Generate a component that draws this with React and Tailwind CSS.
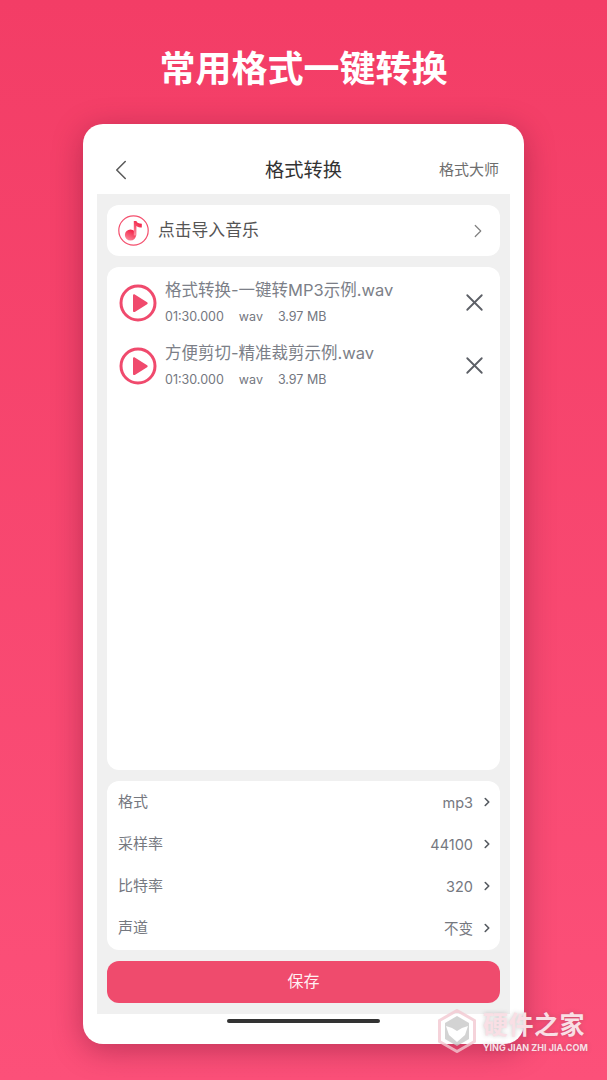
import { ChevronLeft, ChevronRight, X } from 'lucide-react'

const FILES = [
  { name: '格式转换-一键转MP3示例.wav', time: '01:30.000', ext: 'wav', size: '3.97 MB' },
  { name: '方便剪切-精准裁剪示例.wav', time: '01:30.000', ext: 'wav', size: '3.97 MB' },
]

const SETTINGS = [
  { label: '格式', value: 'mp3' },
  { label: '采样率', value: '44100' },
  { label: '比特率', value: '320' },
  { label: '声道', value: '不变' },
]

function MusicIcon() {
  return (
    <svg width="31" height="31" viewBox="0 0 31 31" className="shrink-0">
      <defs>
        <linearGradient id="note" x1="0.7" y1="0" x2="0.2" y2="1">
          <stop offset="0" stopColor="#f2183f" />
          <stop offset="1" stopColor="#fb8f9f" />
        </linearGradient>
      </defs>
      <circle cx="15.5" cy="15.5" r="14.7" fill="#fff" stroke="#f4506e" strokeWidth="1.2" />
      <circle cx="12.500" cy="20" r="5.600" fill="url(#note)" />
      <path d="M15.800 6h2.600c.3 1.800 2.600 2.500 5.400 2.700v3.800c-2.200-.1-4-.6-5.400-1.600V20.500h-2.600z" fill="url(#note)" />
    </svg>
  )
}

function PlayIcon() {
  return (
    <svg width="38" height="38" viewBox="0 0 38 38" className="shrink-0">
      <circle cx="19" cy="19" r="17" fill="none" stroke="#f04a6d" strokeWidth="3" />
      <path d="M14 11.500c0-1 1-1.500 1.800-1l12.300 7.700c.8.500.8 1.500 0 2l-12.300 7.700c-.8.500-1.800 0-1.800-1z" fill="#f04a6d" />
    </svg>
  )
}

function FileRow({ file }) {
  return (
    <div className="flex h-[63px] items-center pl-[12px] pr-[11px]">
      <PlayIcon />
      <div className="ml-[8px] flex-1 min-w-0">
        <p className="-mt-[1px] text-[16.500px] leading-[24px] text-[#7c7f88]">{file.name}</p>
        <div className="mt-[6px] flex text-[12.500px] leading-[18px] text-[#74777f]">
          <span>{file.time}</span>
          <span className="ml-[15px]">{file.ext}</span>
          <span className="ml-[15px]">{file.size}</span>
        </div>
      </div>
      <X size={29} strokeWidth={1.5} className="text-[#5c5f66]" />
    </div>
  )
}

function Watermark() {
  return (
    <div className="absolute left-[438px] top-[1009px] flex items-start">
      <svg width="38" height="44" viewBox="0 0 38 44" className="opacity-80">
        <path d="M19 1.500 36.500 11.500v21L19 42.500 1.500 32.500v-21z" fill="none" stroke="#f3c9d2" strokeWidth="3" />
        <path d="M19 7 31 14v16L19 37 7 30V14z" fill="#c9c9c9" />
        <path d="M8 17l6 2 5 3 5-3 6-2-3 9-8 7-8-7z" fill="#ffffff" />
      </svg>
      <div className="ml-[7px] mt-[2px] flex flex-col text-[#f9dfe5] [text-shadow:0_0_4px_rgba(90,90,90,0.3)]">
        <span className="text-[25px] leading-[28px] font-bold tracking-[0.5px]">硬件之家</span>
        <span className="mt-[3px] text-[9px] leading-[12px] font-bold">YING JIAN ZHI JIA.COM</span>
      </div>
    </div>
  )
}

export default function App() {
  return (
    <div
      className="relative h-[1080px] w-[607px] overflow-hidden bg-gradient-to-b from-[#f33d66] to-[#fc5079] pt-[45px]"
      style={{ fontFamily: 'Inter, "Noto Sans CJK SC", sans-serif' }}
    >
      <h1 className="text-center text-[36px] leading-[48px] font-bold text-white">常用格式一键转换</h1>

      <div className="mx-[83px] mt-[31px] flex h-[920px] w-[441px] flex-col rounded-[20px] bg-white shadow-[0_6px_30px_rgba(120,20,50,0.45)]">
        <header className="flex h-[70px] shrink-0 items-center pt-[22px]">
          <ChevronLeft size={34} strokeWidth={1.1} className="ml-[21px] text-[#5a5a5a]" />
          <span className="ml-[127px] text-[19.250px] leading-[28px] text-[#333333]">格式转换</span>
          <span className="ml-auto mr-[25px] text-[15px] leading-[22px] text-[#6e6e6e]">格式大师</span>
        </header>

        <div className="mx-[14px] flex h-[820px] flex-col gap-[11px] bg-[#f0f0f0] px-[10px] pt-[11px] pb-[11px]">
          <div className="flex h-[51px] shrink-0 items-center rounded-[12px] bg-white pl-[11px] pr-[11px]">
            <MusicIcon />
            <span className="ml-[9px] flex-1 text-[16.800px] text-[#555555]">点击导入音乐</span>
            <ChevronRight size={22} strokeWidth={1.3} className="text-[#808080]" />
          </div>

          <div className="flex-1 rounded-[12px] bg-white pt-[4px]">
            {FILES.map((file) => (
              <FileRow key={file.name} file={file} />
            ))}
          </div>

          <div className="flex h-[169px] shrink-0 flex-col justify-center rounded-[12px] bg-white pl-[11px] pr-[6px]">
            {SETTINGS.map((item) => (
              <div key={item.label} className="flex h-[42px] items-center">
                <span className="flex-1 text-[15px] text-[#75787f]">{item.label}</span>
                <span className="text-[14.500px] text-[#75787f]">{item.value}</span>
                <ChevronRight size={14} strokeWidth={2.8} className="ml-[7px] -mt-[2px] text-[#555a60]" />
              </div>
            ))}
          </div>

          <button className="h-[42px] shrink-0 rounded-[12px] bg-[#ef4b6d] pb-[3px] text-[16px] text-[#fff0f3]">保存</button>
        </div>

        <div className="flex flex-1 justify-center pt-[5px]">
          <div className="h-[4px] w-[153px] rounded-full bg-[#333333]" />
        </div>
      </div>

      <Watermark />
    </div>
  )
}
